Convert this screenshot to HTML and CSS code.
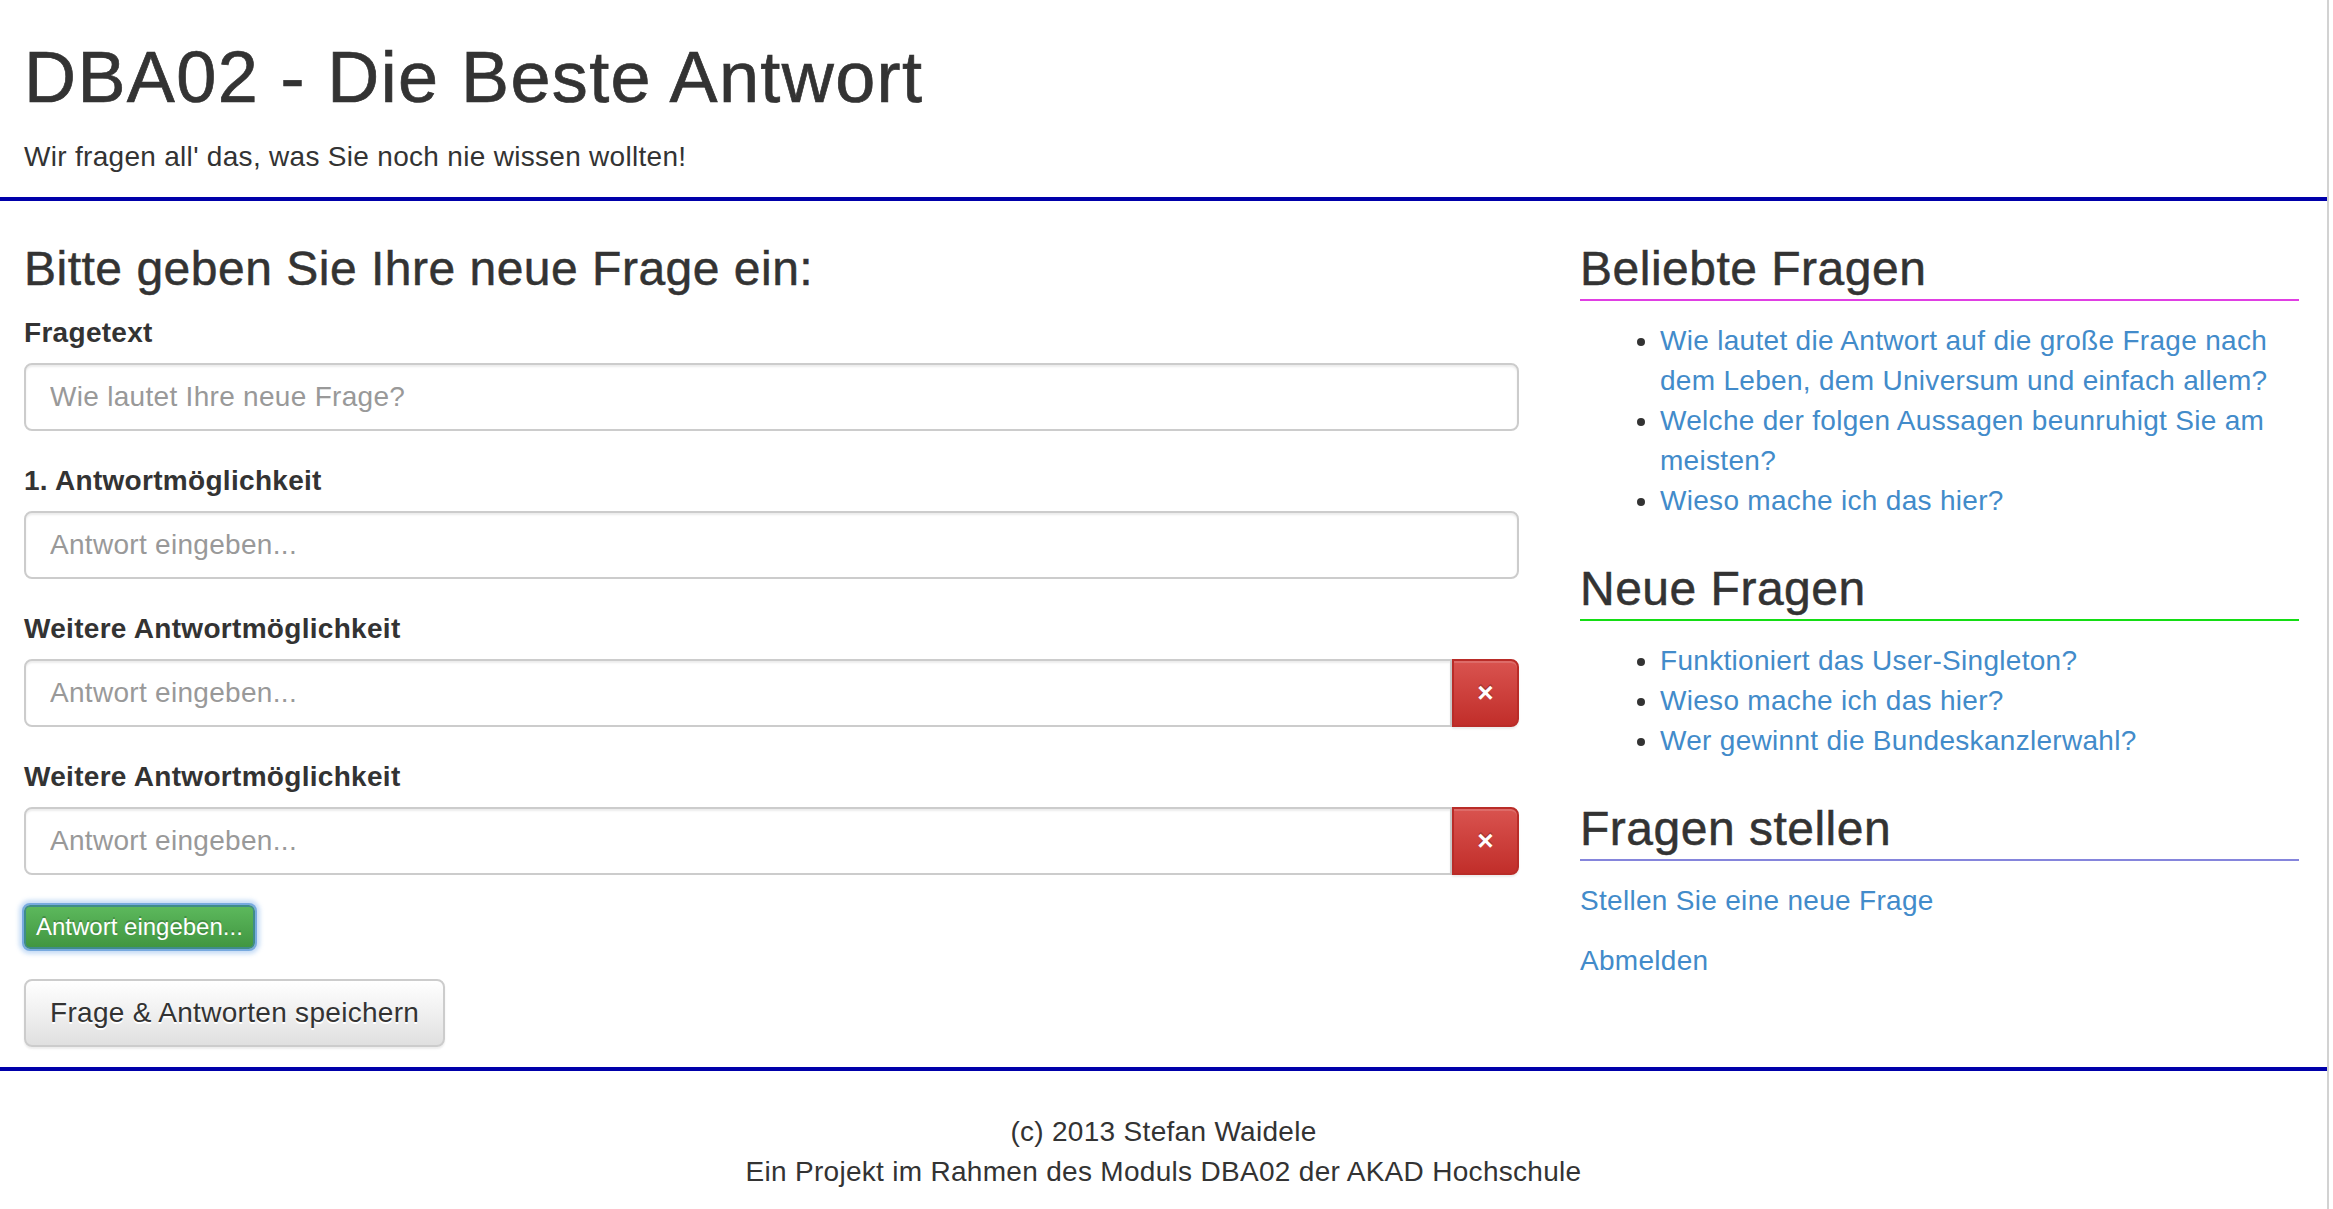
FILE: index.html
```html
<!DOCTYPE html>
<html lang="de">
<head>
<meta charset="utf-8">
<title>DBA02 - Die Beste Antwort</title>
<link rel="stylesheet" href="styles.css">
</head>
<body>
<div class="page">
  <header class="site-header">
    <h1 class="site-title">DBA02 - Die Beste Antwort</h1>
    <p class="site-tagline">Wir fragen all' das, was Sie noch nie wissen wollten!</p>
  </header>

  <main class="content">
    <section class="main-col">
      <h3 class="form-title">Bitte geben Sie Ihre neue Frage ein:</h3>
      <form class="question-form">
        <div class="form-group">
          <label class="form-label">Fragetext</label>
          <input class="form-control" type="text" placeholder="Wie lautet Ihre neue Frage?">
        </div>
        <div class="form-group">
          <label class="form-label">1. Antwortmöglichkeit</label>
          <input class="form-control" type="text" placeholder="Antwort eingeben...">
        </div>
        <div class="form-group">
          <label class="form-label">Weitere Antwortmöglichkeit</label>
          <div class="input-group">
            <input class="form-control grouped" type="text" placeholder="Antwort eingeben...">
            <button class="btn btn-danger" type="button">&times;</button>
          </div>
        </div>
        <div class="form-group">
          <label class="form-label">Weitere Antwortmöglichkeit</label>
          <div class="input-group">
            <input class="form-control grouped" type="text" placeholder="Antwort eingeben...">
            <button class="btn btn-danger" type="button">&times;</button>
          </div>
        </div>
        <div class="btn-row add-row">
          <button class="btn btn-success btn-xs is-focused" type="button">Antwort eingeben...</button>
        </div>
        <div class="btn-row submit-row">
          <button class="btn btn-default" type="button">Frage &amp; Antworten speichern</button>
        </div>
      </form>
    </section>

    <aside class="side-col">
      <h3 class="side-title popular">Beliebte Fragen</h3>
      <ul class="question-list">
        <li><a href="#">Wie lautet die Antwort auf die große Frage nach dem Leben, dem Universum und einfach allem?</a></li>
        <li><a href="#">Welche der folgen Aussagen beunruhigt Sie am meisten?</a></li>
        <li><a href="#">Wieso mache ich das hier?</a></li>
      </ul>

      <h3 class="side-title recent">Neue Fragen</h3>
      <ul class="question-list">
        <li><a href="#">Funktioniert das User-Singleton?</a></li>
        <li><a href="#">Wieso mache ich das hier?</a></li>
        <li><a href="#">Wer gewinnt die Bundeskanzlerwahl?</a></li>
      </ul>

      <h3 class="side-title ask">Fragen stellen</h3>
      <p class="side-link"><a href="#">Stellen Sie eine neue Frage</a></p>
      <p class="side-link"><a href="#">Abmelden</a></p>
    </aside>
  </main>

  <footer class="site-footer">
    <div class="footer-line">(c) 2013 Stefan Waidele</div>
    <div class="footer-line">Ein Projekt im Rahmen des Moduls DBA02 der AKAD Hochschule</div>
  </footer>
</div>
</body>
</html>
```

FILE: styles.css
```css
* {
  box-sizing: border-box;
}

html, body {
  margin: 0;
  padding: 0;
  background: #fff;
}

body {
  font-family: "Liberation Sans", Arial, Helvetica, sans-serif;
  font-size: 28px;
  line-height: 40px;
  letter-spacing: 0.3px;
  color: #333;
}

.page {
  min-height: 100vh;
  margin-right: 4px;
  border-right: 2px solid #d2d2d2;
}

a {
  color: #428bca;
  text-decoration: none;
}

/* Header */
.site-header {
  padding: 38px 24px 0;
  border-bottom: 4px solid #0000aa;
}

.site-title {
  margin: 0 0 20px;
  font-size: 72px;
  line-height: 1.1;
  font-weight: 400;
  letter-spacing: 1.4px;
  -webkit-text-stroke: 0.7px #333;
  color: #333;
}

.site-tagline {
  margin: 0 0 20px;
}

/* Content */
.content {
  display: flex;
  gap: 61px;
  padding: 0 24px;
}

.main-col {
  width: 1495px;
  flex: none;
}

.side-col {
  width: 719px;
  flex: none;
}

.form-title,
.side-title {
  font-size: 48px;
  line-height: 1.1;
  font-weight: 400;
  letter-spacing: 0.5px;
  -webkit-text-stroke: 0.5px #333;
  color: #333;
}

.form-title {
  margin: 42px 0 17px;
}

.question-form {
  margin: 0;
}

.form-group {
  margin-bottom: 30px;
}

.form-label {
  display: block;
  margin-bottom: 10px;
  font-weight: 700;
}

.form-control {
  display: block;
  width: 100%;
  height: 68px;
  padding: 12px 24px;
  font-family: inherit;
  font-size: 28px;
  line-height: 40px;
  letter-spacing: 0.3px;
  color: #555;
  background: #fff;
  border: 2px solid #ccc;
  border-radius: 8px;
  box-shadow: inset 0 2px 2px rgba(0, 0, 0, 0.075);
  outline: none;
}

.form-control::placeholder {
  color: #999;
}

.input-group {
  display: flex;
}

.form-control.grouped {
  flex: 1;
  width: auto;
  border-radius: 8px 0 0 8px;
}

.btn {
  font-family: inherit;
  letter-spacing: 0.3px;
  cursor: pointer;
  border: 2px solid transparent;
}

.btn-danger {
  flex: none;
  width: 67px;
  height: 68px;
  padding: 0;
  font-size: 28px;
  font-weight: 700;
  line-height: 1;
  color: #fff;
  background: linear-gradient(to bottom, #d9534f 0%, #c12e2a 100%);
  border-color: #b92c28;
  border-radius: 0 8px 8px 0;
  text-shadow: 0 -2px 0 rgba(0, 0, 0, 0.2);
  box-shadow: inset 0 2px 0 rgba(255, 255, 255, 0.15), 0 2px 2px rgba(0, 0, 0, 0.075);
}

.btn-row {
  display: flex;
}

.add-row {
  margin-bottom: 30px;
}

.submit-row {
  margin-bottom: 20px;
}

.btn-xs {
  height: 44px;
  padding: 2px 10px;
  font-size: 24px;
  line-height: 36px;
  letter-spacing: 0;
  border-radius: 6px;
}

.btn-success {
  color: #fff;
  background: linear-gradient(to bottom, #5cb85c 0%, #419641 100%);
  border-color: #3e8f3e;
  text-shadow: 0 -2px 0 rgba(0, 0, 0, 0.2);
}

.btn-success.is-focused {
  border-color: #3f8c8a;
  box-shadow: 0 0 0 2px rgba(92, 152, 215, 0.75), 0 0 4px 5px rgba(130, 180, 235, 0.45);
}

.btn-default {
  height: 68px;
  padding: 12px 24px;
  font-size: 28px;
  line-height: 40px;
  color: #333;
  background: linear-gradient(to bottom, #fff 0%, #e0e0e0 100%);
  border-color: #ccc;
  border-radius: 8px;
  text-shadow: 0 2px 0 #fff;
  box-shadow: inset 0 2px 0 rgba(255, 255, 255, 0.15), 0 2px 2px rgba(0, 0, 0, 0.075);
}

/* Sidebar */
.side-title {
  margin: 42px 0 20px;
  padding-bottom: 3px;
  border-bottom: 2px solid #333;
}

.side-title.popular {
  border-bottom-color: #e03fe3;
}

.side-title.recent {
  border-bottom-color: #14dd14;
}

.side-title.ask {
  border-bottom-color: #8585dc;
}

.question-list {
  margin: 0;
  padding-left: 80px;
}

.side-link {
  margin: 0 0 20px;
}

/* Footer */
.site-footer {
  border-top: 4px solid #0000aa;
  padding-top: 41px;
  text-align: center;
}

.footer-line {
  line-height: 40px;
}
```
